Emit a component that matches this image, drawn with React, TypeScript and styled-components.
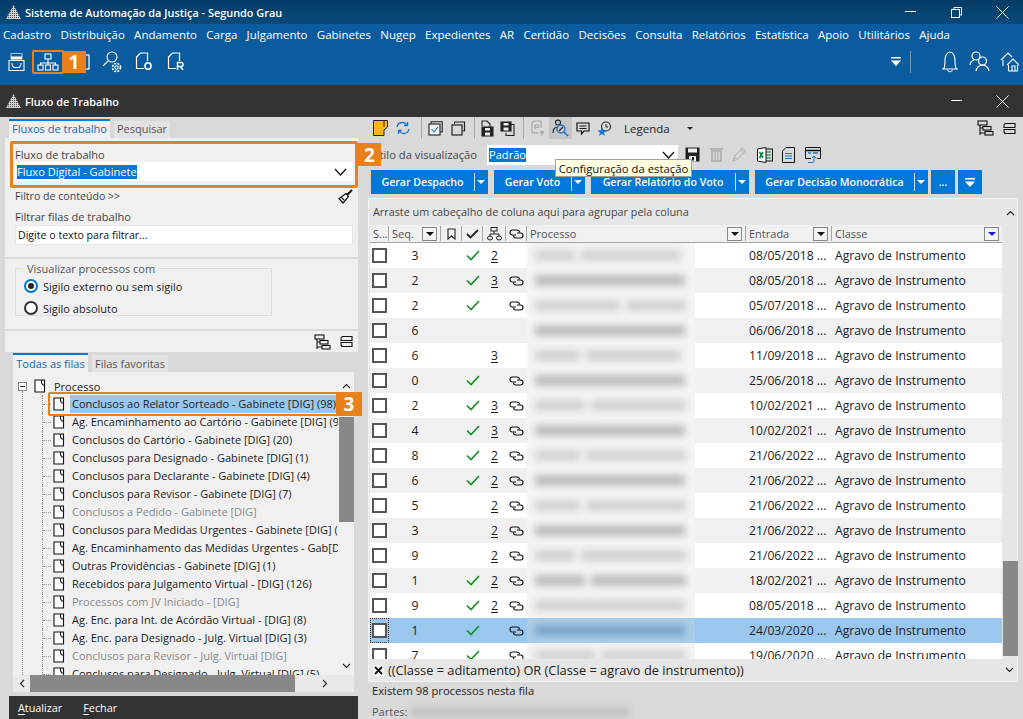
import React from 'react';
import styled, { createGlobalStyle } from 'styled-components';

const ORANGE = '#e8811c';
const FONT = '"Open Sans", "Noto Sans", "Liberation Sans", sans-serif';

const GlobalStyle = createGlobalStyle`
  html, body {
    margin: 0;
    padding: 0;
    background: #d9d9d9;
    font-family: ${FONT};
    font-size: 11px;
    color: #222;
  }
`;

const Page = styled.div`
  width: 1023px;
  height: 719px;
  overflow: hidden;
  display: flex;
  flex-direction: column;
  background: #d9d9d9;
`;

const TitleBar = styled.div`
  height: 24px;
  flex: none;
  display: flex;
  align-items: center;
  padding-left: 6px;
  gap: 4px;
  color: #fff;
  background: linear-gradient(#063c66, #084a7c);
`;

const TitleText = styled.span`
  font-size: 10.9px;
  font-weight: 600;
`;

const WinButtons = styled.div`
  margin-left: auto;
  margin-right: -2px;
  display: flex;
`;

const WinButton = styled.span`
  width: 46px;
  display: flex;
  justify-content: center;
  align-items: center;
`;

const MenuBar = styled.div`
  height: 20px;
  flex: none;
  display: flex;
  align-items: center;
  gap: 9.3px;
  padding-left: 3px;
  color: #fff;
  background: #0b5c9e;
  font-size: 11.5px;
`;

const Toolbar = styled.div`
  height: 41px;
  flex: none;
  display: flex;
  align-items: center;
  box-sizing: border-box;
  padding-bottom: 6px;
  background: #0b5c9e;
`;

const ToolSlot = styled.span<{ $active?: boolean; $w?: number }>`
  position: relative;
  width: ${(p) => p.$w || 32}px;
  height: 24px;
  flex: none;
  display: flex;
  justify-content: center;
  align-items: center;
  box-sizing: border-box;
  border: ${(p) => (p.$active ? `2px solid ${ORANGE}` : 'none')};
  border-radius: 2px;
`;

const ToolRight = styled.div`
  margin-left: auto;
  display: flex;
  align-items: center;
  margin-right: -2px;
`;

const ToolDivider = styled.span`
  width: 1px;
  height: 22px;
  margin: 0 24px 0 9px;
  background: #7d97ae;
`;

const Callout = styled.span<{ $left: number; $top: number; $w: number; $h: number }>`
  position: absolute;
  left: ${(p) => p.$left}px;
  top: ${(p) => p.$top}px;
  width: ${(p) => p.$w}px;
  height: ${(p) => p.$h}px;
  display: flex;
  justify-content: center;
  align-items: center;
  background: ${ORANGE};
  color: #fff;
  font-size: 19px;
  font-weight: 700;
  z-index: 5;
`;

const Frame = styled.span<{ $left: number; $top: number; $w: number; $h: number; $b: number }>`
  position: absolute;
  left: ${(p) => p.$left}px;
  top: ${(p) => p.$top}px;
  width: ${(p) => p.$w}px;
  height: ${(p) => p.$h}px;
  box-sizing: border-box;
  border: ${(p) => p.$b}px solid ${ORANGE};
  border-radius: 2px;
  z-index: 4;
  pointer-events: none;
`;

const WindowHeader = styled.div`
  height: 32px;
  flex: none;
  display: flex;
  align-items: center;
  padding-left: 6px;
  gap: 4px;
  background: #333;
  color: #fff;
`;

const Main = styled.div`
  flex: 1;
  display: flex;
  min-height: 0;
`;

const LeftPane = styled.div`
  position: relative;
  z-index: 2;
  width: 362px;
  flex: none;
  display: flex;
  flex-direction: column;
  padding-top: 2px;
  box-sizing: border-box;
`;

const Tabs = styled.div<{ $left: number; $lift?: number }>`
  display: flex;
  align-items: flex-end;
  gap: 4px;
  margin-left: ${(p) => p.$left}px;
  height: 19px;
  & > span {
    padding-bottom: ${(p) => p.$lift || 0}px;
  }
`;

const Tab = styled.span<{ $active?: boolean; $w: number }>`
  width: ${(p) => p.$w}px;
  height: ${(p) => (p.$active ? 19 : 17)}px;
  box-sizing: border-box;
  display: flex;
  align-items: center;
  justify-content: center;
  background: ${(p) => (p.$active ? '#f0f0f0' : '#e3e3e3')};
  border-top: ${(p) => (p.$active ? '2px solid #0078d7' : 'none')};
  color: ${(p) => (p.$active ? '#0a6cc0' : '#555')};
  font-size: 11px;
`;

const Panel = styled.div`
  margin: 0 0 1px 5px;
  width: 353px;
  height: 214px;
  display: flex;
  flex-direction: column;
  gap: 2px;
`;

const PanelSection = styled.div<{ $h: number }>`
  height: ${(p) => p.$h}px;
  flex: none;
  background: #f0f0f0;
  box-sizing: border-box;
  padding: 0 5px 0 10px;
`;

const FieldLabel = styled.div<{ $top: number }>`
  padding-top: ${(p) => p.$top}px;
  line-height: 13px;
  color: #444;
  font-size: 11px;
`;

const SelectBox = styled.div`
  height: 19px;
  margin-top: 1px;
  box-sizing: border-box;
  background: #fff;
  display: flex;
  align-items: center;
  justify-content: space-between;
  padding: 0 6px 0 2px;
  font-size: 11.1px;
`;

const Selected = styled.span`
  background: #0078d7;
  color: #fff;
  line-height: 14px;
`;

const FilterLine = styled.div`
  display: flex;
  justify-content: space-between;
  align-items: center;
  height: 18px;
  margin-top: 6px;
  color: #444;
  font-size: 10.6px;
`;

const TextInput = styled.div`
  height: 20px;
  margin-top: 2px;
  background: #fff;
  border: 1px solid #e6e6e6;
  box-sizing: border-box;
  display: flex;
  align-items: center;
  padding-left: 2px;
  font-size: 10.6px;
  color: #111;
`;

const RadioSet = styled.fieldset`
  margin: 3px 0 0;
  padding: 0 0 0 8px;
  width: 257px;
  height: 54px;
  box-sizing: border-box;
  border: 1px solid #dedede;
`;

const RadioLegend = styled.legend`
  margin-left: -1px;
  padding: 0 4px;
  font-size: 11px;
  line-height: 13px;
  color: #555;
`;

const RadioRow = styled.div`
  display: flex;
  align-items: center;
  gap: 5px;
  height: 22px;
  font-size: 11px;
  color: #222;
`;

const RadioDot = styled.span<{ $on?: boolean }>`
  width: 14px;
  height: 14px;
  box-sizing: border-box;
  border-radius: 50%;
  border: 2px solid ${(p) => (p.$on ? '#0078d7' : '#333')};
  background: #fff;
  display: flex;
  justify-content: center;
  align-items: center;
  &::after {
    content: '';
    width: 6px;
    height: 6px;
    border-radius: 50%;
    background: ${(p) => (p.$on ? '#222' : 'transparent')};
  }
`;

const IconStrip = styled.div<{ $pad: number; $push?: boolean }>`
  display: flex;
  justify-content: flex-end;
  align-items: center;
  gap: 9px;
  height: 100%;
  padding-right: ${(p) => p.$pad}px;
  margin-left: ${(p) => (p.$push ? 'auto' : '0')};
`;

const TreePanel = styled.div`
  margin-left: 13px;
  width: 341px;
  height: 320px;
  background: #f0f0f0;
  display: flex;
  flex-direction: column;
`;

const TreeBody = styled.div`
  flex: 1;
  min-height: 0;
  display: flex;
`;

const TreeList = styled.div`
  flex: 1;
  min-width: 0;
  overflow: hidden;
  padding-top: 5px;
`;

const TreeListInner = styled.div`
  position: relative;
`;

const TreeRoot = styled.div`
  height: 18px;
  display: flex;
  align-items: center;
  padding-left: 5px;
  gap: 7px;
  white-space: nowrap;
  font-size: 11px;
`;

const RootLabel = styled.span`
  margin-left: 1px;
`;

const Collapse = styled.span`
  width: 9px;
  height: 9px;
  flex: none;
  box-sizing: border-box;
  border: 1px solid #888;
  background: #fff;
  display: flex;
  justify-content: center;
  align-items: center;
  &::after {
    content: '';
    width: 5px;
    height: 1px;
    background: #333;
  }
`;

const TreeRow = styled.div<{ $muted?: boolean }>`
  position: relative;
  height: 18px;
  display: flex;
  align-items: center;
  padding-left: 40px;
  white-space: nowrap;
  color: ${(p) => (p.$muted ? '#8a8a8a' : '#1b1b1b')};
  svg {
    flex: none;
  }
  &::before {
    content: '';
    position: absolute;
    left: 29px;
    top: 0;
    bottom: 0;
    border-left: 1px dotted #999;
  }
  &::after {
    content: '';
    position: absolute;
    left: 30px;
    width: 8px;
    top: 9px;
    border-top: 1px dotted #999;
  }
`;

const RootLine = styled.span`
  position: absolute;
  left: 9px;
  top: 14px;
  height: 300px;
  border-left: 1px dotted #999;
`;

const TreeLabel = styled.span<{ $sel?: boolean }>`
  margin-left: 5px;
  padding-left: 2px;
  line-height: 18px;
  flex: ${(p) => (p.$sel ? 1 : 'none')};
  background: ${(p) => (p.$sel ? '#9ac7ee' : 'transparent')};
  font-size: 11px;
`;

const VBar = styled.div`
  width: 16px;
  flex: none;
  margin-top: 5px;
  display: flex;
  flex-direction: column;
  align-items: center;
`;

const BarArrow = styled.span<{ $h?: number; $end?: boolean }>`
  height: ${(p) => p.$h || 18}px;
  margin-top: ${(p) => (p.$end ? 'auto' : '0')};
  flex: none;
  display: flex;
  justify-content: center;
  align-items: center;
`;

const VThumb = styled.div<{ $h: number; $mt: string }>`
  width: 15px;
  height: ${(p) => p.$h}px;
  margin-top: ${(p) => p.$mt};
  background: #888;
  flex: none;
`;

const HBar = styled.div`
  height: 17px;
  flex: none;
  display: flex;
  align-items: center;
  background: #e9e9e9;
`;

const HThumb = styled.div`
  width: 265px;
  height: 100%;
  background: #888;
`;

const ArrowCell = styled.span<{ $w: number }>`
  width: ${(p) => p.$w}px;
  display: flex;
  justify-content: center;
  flex: none;
`;

const BottomBar = styled.div`
  margin: 4px 0 0 9px;
  width: 349px;
  flex: 1;
  background: #333;
  color: #fff;
  display: flex;
  align-items: center;
  gap: 21px;
  padding-left: 9px;
  box-sizing: border-box;
  font-size: 10.8px;
  u {
    text-underline-offset: 2px;
  }
`;

const RightPane = styled.div`
  position: relative;
  flex: 1;
  display: flex;
  flex-direction: column;
  min-width: 0;
`;

const ActionBar = styled.div`
  height: 24px;
  flex: none;
  box-sizing: border-box;
  padding: 0 0 2px 10px;
  display: flex;
  align-items: center;
`;

const ActionSlot = styled.span<{ $w: number; $on?: boolean }>`
  width: ${(p) => p.$w}px;
  height: 22px;
  flex: none;
  display: flex;
  justify-content: center;
  align-items: center;
  background: ${(p) => (p.$on ? '#c6c6c6' : 'transparent')};
`;

const ActionSep = styled.span`
  width: 1px;
  height: 22px;
  flex: none;
  margin: 0 3px;
  background: #aaa;
`;

const Legend = styled.span`
  margin-left: 10px;
  font-size: 11.5px;
  color: #222;
`;

const Caret = styled.span<{ $color?: string; $size?: number }>`
  display: inline-block;
  width: 0;
  height: 0;
  border-left: ${(p) => p.$size || 3}px solid transparent;
  border-right: ${(p) => p.$size || 3}px solid transparent;
  border-top: ${(p) => p.$size || 3}px solid ${(p) => p.$color || '#222'};
`;

const CaretBox = styled.span`
  margin-left: 17px;
  display: flex;
`;

const ViewRow = styled.div`
  height: 27px;
  flex: none;
  display: flex;
  align-items: center;
  padding-left: 6px;
`;

const ViewLabel = styled.span`
  width: 119px;
  flex: none;
  color: #444;
  font-size: 11.2px;
  white-space: nowrap;
`;

const ViewSelect = styled(SelectBox)`
  width: 191px;
  flex: none;
  margin: 0 7px 0 0;
  height: 20px;
  padding-right: 3px;
`;

const ViewIcons = styled.div`
  display: flex;
  align-items: center;
  gap: 9.5px;
`;

const ButtonRow = styled.div`
  height: 24px;
  flex: none;
  margin-top: 2px;
  padding-left: 9px;
  display: flex;
  gap: 6px;
`;

const ActionButton = styled.span<{ $w: number; $gap?: number }>`
  width: ${(p) => p.$w}px;
  margin-right: ${(p) => p.$gap ?? 0}px;
  height: 24px;
  flex: none;
  display: flex;
  align-items: center;
  justify-content: center;
  box-sizing: border-box;
  background: #0078d7;
  color: #fff;
  font-size: 10.6px;
  font-weight: 600;
  white-space: nowrap;
`;

const SplitLabel = styled.span`
  flex: 1;
  text-align: center;
`;

const SplitArrow = styled.span`
  width: 14px;
  height: 100%;
  flex: none;
  display: flex;
  justify-content: center;
  align-items: center;
  position: relative;
  &::before {
    content: '';
    position: absolute;
    left: 0;
    top: 3px;
    bottom: 3px;
    width: 1px;
    background: #cfe4f7;
  }
`;

const Card = styled.div`
  margin: 4px 0 0 6px;
  width: 650px;
  height: 484px;
  flex: none;
  box-sizing: border-box;
  border: 1px solid #f4f4f4;
  background: #e6e6e6;
  display: flex;
  flex-direction: column;
`;

const CardMain = styled.div`
  flex: 1;
  min-height: 0;
  display: flex;
  padding-left: 1px;
`;

const CardContent = styled.div`
  width: 632px;
  flex: none;
  display: flex;
  flex-direction: column;
`;

const GroupHint = styled.div`
  height: 26px;
  flex: none;
  display: flex;
  align-items: center;
  padding-left: 3px;
  padding-bottom: 1px;
  box-sizing: border-box;
  color: #444;
  font-size: 10.8px;
`;

const COLS = '19px 52px 21px 21px 23px 21px 219px 86px 170px';

const HeaderRow = styled.div`
  height: 17px;
  flex: none;
  display: grid;
  grid-template-columns: ${COLS};
  background: #f0f0f0;
  border-bottom: 1px solid #a5a5a5;
`;

const HeaderCell = styled.div<{ $center?: boolean }>`
  display: flex;
  align-items: center;
  justify-content: ${(p) => (p.$center ? 'center' : 'space-between')};
  padding: ${(p) => (p.$center ? '0' : '0 3px 0 3px')};
  border-right: 1px solid #a5a5a5;
  margin: 1px 0;
  color: #555;
  font-size: 11px;
  white-space: nowrap;
  overflow: hidden;
  &:last-child {
    border-right: none;
  }
`;

const SortButton = styled.span`
  width: 15px;
  height: 14px;
  flex: none;
  box-sizing: border-box;
  border: 1px solid #888;
  background: #f3f3f3;
  display: flex;
  justify-content: center;
  align-items: center;
`;

const Rows = styled.div`
  flex: 1;
  min-height: 0;
  overflow: hidden;
`;

const Row = styled.div<{ $stripe: boolean; $sel?: boolean }>`
  height: 25px;
  display: grid;
  grid-template-columns: ${COLS};
  align-items: center;
  background: ${(p) => (p.$sel ? '#99c7ee' : p.$stripe ? '#f0f0f0' : '#fff')};
  color: #1c1c1c;
  font-size: 12.2px;
`;

const CheckCell = styled.div<{ $focus?: boolean }>`
  height: 100%;
  display: flex;
  align-items: center;
  justify-content: center;
  box-sizing: border-box;
  outline: ${(p) => (p.$focus ? '1px dotted #333' : 'none')};
  outline-offset: -1px;
`;

const CheckBox = styled.span`
  width: 15px;
  height: 15px;
  box-sizing: border-box;
  border: 2px solid #555;
  background: #fff;
`;

const Center = styled.div`
  display: flex;
  justify-content: center;
  align-items: center;
`;

const LinkNumber = styled.u`
  text-underline-offset: 2px;
`;

const SmearCell = styled.div`
  height: 100%;
  overflow: hidden;
`;

const SmearBack = styled.div<{ $sel?: boolean }>`
  width: 168px;
  height: 100%;
  display: flex;
  align-items: center;
  gap: 6px;
  padding-left: 8px;
  box-sizing: border-box;
  background: ${(p) => (p.$sel ? '#a9cde9' : '#f4f4f4')};
`;

const Smear = styled.span<{ $w: number; $sel?: boolean; $dark?: boolean }>`
  width: ${(p) => p.$w}px;
  height: 11px;
  flex: none;
  background: ${(p) => (p.$sel ? '#7ba7ca' : p.$dark ? '#bdbdbd' : '#d2d2d2')};
  filter: blur(3.5px);
`;

const TextCell = styled.div`
  padding-left: 3px;
  white-space: nowrap;
  overflow: hidden;
`;

const FilterBar = styled.div`
  height: 22px;
  flex: none;
  display: flex;
  align-items: center;
  gap: 4px;
  padding-left: 4px;
  font-size: 12.8px;
  color: #222;
`;

const ClearFilter = styled.span`
  width: 11px;
  height: 11px;
  background: #f7f7f7;
  display: flex;
  justify-content: center;
  align-items: center;
`;

const FilterChevron = styled.span`
  margin-left: auto;
  margin-right: 3px;
  display: flex;
`;

const StatusLine = styled.div`
  height: 18px;
  margin: 0 0 0 10px;
  display: flex;
  align-items: center;
  color: #222;
  font-size: 11.2px;
`;

const PartsLine = styled.div`
  flex: 1;
  margin: 5px 0 0 10px;
  display: flex;
  align-items: flex-start;
  gap: 3px;
  color: #555;
  font-size: 11px;
`;

const PartsSmear = styled.span`
  width: 220px;
  height: 10px;
  margin-top: 3px;
  background: #c3c3c3;
  filter: blur(3px);
`;

const Tooltip = styled.div`
  position: absolute;
  left: 193px;
  top: 42px;
  width: 137px;
  height: 18px;
  box-sizing: border-box;
  background: #ffffe1;
  border: 1px solid #a0a0a0;
  display: flex;
  align-items: center;
  justify-content: center;
  font-size: 11.3px;
  color: #111;
  white-space: nowrap;
  z-index: 6;
`;

/* drawings */

const Logo = () => (
  <svg width="15" height="14" viewBox="0 0 15 14">
    <defs>
      <pattern id="logoDots" width="2" height="2" patternUnits="userSpaceOnUse">
        <rect width="2" height="2" fill="#cfcfcf" />
        <rect width="1" height="1" fill="#555" />
      </pattern>
    </defs>
    <polygon points="7.5,0 15,14 0,14" fill="url(#logoDots)" />
  </svg>
);

const Minimize = () => (
  <svg width="11" height="2" viewBox="0 0 11 2">
    <rect width="11" height="1" fill="#fff" />
  </svg>
);

const Restore = () => (
  <svg width="11" height="11" viewBox="0 0 11 11" fill="none" stroke="#fff">
    <rect x="0.5" y="2.5" width="8" height="8" />
    <path d="M3 2.5V.5h7.5V8H8.5" />
  </svg>
);

const CloseX = () => (
  <svg width="13" height="13" viewBox="0 0 13 13" stroke="#fff" strokeWidth="1">
    <path d="M.5.5l12 12M12.5.5l-12 12" />
  </svg>
);

const Tray = () => (
  <svg width="17" height="20" viewBox="0 0 17 20" fill="none" stroke="#fff" strokeWidth="1.1">
    <path d="M3 7V1.500h11V7" stroke="#9fbfd8" />
    <rect x="3" y="4.500" width="11" height="3" fill="#fff" stroke="none" />
    <path d="M1 8.500h15V18.500H1zM4 11c0 3 1 4.500 3 4.500h3c2 0 3-1.500 3-4.500" />
  </svg>
);

const OrgChart = () => (
  <svg width="22" height="18" viewBox="0 0 22 18" fill="none" stroke="#fff" strokeWidth="1.1">
    <rect x="8" y="1" width="6" height="5" />
    <path d="M11 6v4M3.500 12v-2h15v2M11 10v2" />
    <rect x="1" y="12" width="5" height="5" />
    <rect x="8.500" y="12" width="5" height="5" />
    <rect x="16" y="12" width="5" height="5" />
  </svg>
);

const HiddenDoc = () => (
  <svg width="20" height="16" viewBox="0 0 20 16" fill="none" stroke="#fff" strokeWidth="1.2">
    <rect x="1" y="1" width="18" height="14" />
  </svg>
);

const SearchGear = () => (
  <svg width="20" height="22" viewBox="0 0 20 22" fill="none" stroke="#fff" strokeWidth="1.1">
    <circle cx="10" cy="6" r="5" />
    <path d="M6 10l-5 5" />
    <circle cx="14.500" cy="16.500" r="1.700" />
    <circle cx="14.500" cy="16.500" r="4" strokeDasharray="2 1.200" strokeWidth="1.600" />
  </svg>
);

const DocLetter = ({ letter }: { letter: string }) => (
  <svg width="18" height="19" viewBox="0 0 18 19" fill="none" stroke="#fff" strokeWidth="1.2">
    <path d="M9 16.500H1.500V5L5.500 1H12.500V9" />
    {letter === 'O' ? (
      <ellipse cx="13" cy="14" rx="3" ry="3.300" strokeWidth="1.600" />
    ) : (
      <path d="M10.500 18v-7.500h3.500a2 2 0 010 4h-3.500M13.500 14.500l2.500 3.500" strokeWidth="1.500" />
    )}
  </svg>
);

const FilterArrow = () => (
  <svg width="10" height="9" viewBox="0 0 10 9" fill="#fff">
    <rect width="10" height="1.500" />
    <polygon points="0,3.500 10,3.500 5,9" />
  </svg>
);

const Bell = () => (
  <svg width="18" height="23" viewBox="0 0 18 23" fill="none" stroke="#fff" strokeWidth="1.100">
    <path d="M1 19h16M2.500 19c1.500-2 1.500-4 1.500-9 0-4 2-8 5-8s5 4 5 8c0 5 0 7 1.500 9" />
    <path d="M6.500 19.500c.5 3 4.500 3 5 0" stroke="#c8d6e2" />
  </svg>
);

const Users = () => (
  <svg width="22" height="21" viewBox="0 0 22 21" fill="none" stroke="#fff" strokeWidth="1.200">
    <circle cx="7" cy="5" r="4" />
    <path d="M1 14c.5-3 2-4.500 4-5" />
    <circle cx="13.500" cy="10" r="4" fill="#0b5c9e" />
    <path d="M7 20c.5-3 3-6 6.500-6s6 3 6.500 6" />
  </svg>
);

const Home = () => (
  <svg width="20" height="20" viewBox="0 0 20 20" fill="none" stroke="#fff" strokeWidth="1.100">
    <path d="M1 8l7-7 4 4M7 13l6-6 6 6M8.500 19h9v-6M8.500 13v6M12 19v-5h3v5" />
    <path d="M3 8v6" />
  </svg>
);

const ChevronDown = () => (
  <svg width="13" height="8" viewBox="0 0 13 8" fill="none" stroke="#111" strokeWidth="1.300">
    <path d="M1 1l5.500 6L12 1" />
  </svg>
);

const Broom = () => (
  <svg width="15" height="15" viewBox="0 0 15 15" fill="none" stroke="#111" strokeWidth="1.200">
    <path d="M14 1L9 6" strokeWidth="2" />
    <path d="M8 4.500L1 9.500l4 4.500 5.500-6.500z" fill="#fff" />
    <path d="M3 8l3 3" />
  </svg>
);

const TreeTable = () => (
  <svg width="17" height="16" viewBox="0 0 17 16" fill="none" stroke="#111" strokeWidth="1.100">
    <rect x="1" y="1" width="9" height="4" />
    <rect x="6" y="6.500" width="8" height="3.500" />
    <rect x="8" y="11.500" width="8" height="3.500" />
    <path d="M3 5v10M3 8h3M3 13h5" />
  </svg>
);

const Rows2 = () => (
  <svg width="13" height="13" viewBox="0 0 13 13" fill="none" stroke="#111" strokeWidth="1.100">
    <path d="M3 1.500h9v4H1v-2a2 2 0 012-2zM3 11.500h9v-4H1v2a2 2 0 002 2z" />
  </svg>
);

const TreeDoc = () => (
  <svg width="12" height="14" viewBox="0 0 12 14" fill="none" stroke="#111" strokeWidth="1.100">
    <path d="M7 1H1v12h9.500V6" fill="#fff" />
    <path d="M7.500 1h3v5h-1.500L7.500 4z" fill="#fff" />
  </svg>
);

const FlipY = styled.svg<{ $flip?: boolean }>`
  transform: ${(p) => (p.$flip ? 'scaleY(-1)' : 'none')};
`;

const FlipX = styled.svg<{ $flip?: boolean }>`
  transform: ${(p) => (p.$flip ? 'scaleX(-1)' : 'none')};
`;

const Up = ({ flip }: { flip?: boolean }) => (
  <FlipY $flip={flip} width="9" height="6" viewBox="0 0 9 6" fill="none" stroke="#222" strokeWidth="1.100">
    <path d="M1 5l3.500-3.500L8 5" />
  </FlipY>
);

const Side = ({ flip }: { flip?: boolean }) => (
  <FlipX $flip={flip} width="6" height="9" viewBox="0 0 6 9" fill="none" stroke="#222" strokeWidth="1.100">
    <path d="M5 1L1.500 4.500 5 8" />
  </FlipX>
);

const YellowDoc = () => (
  <svg width="15" height="16" viewBox="0 0 15 16">
    <path d="M.5.500h14V7L11 10v5.500H.5z" fill="#fdb714" stroke="#222" />
    <path d="M11 .5V7" stroke="#222" fill="none" />
  </svg>
);

const Refresh = () => (
  <svg width="14" height="14" viewBox="0 0 14 14" fill="none" stroke="#1a73d2" strokeWidth="1.300">
    <path d="M1 6c.5-3 3-4.500 5.500-4.500 2 0 3.500 1 4.500 2.500M11.500 1v3.500H8M13 8c-.5 3-3 4.500-5.500 4.500-2 0-3.500-1-4.500-2.500M2.500 13V9.500H6" />
  </svg>
);

const CheckDoc = () => (
  <svg width="15" height="15" viewBox="0 0 15 15" fill="none" stroke="#222" strokeWidth="1.100">
    <path d="M3 3V.8h11.200V11H12" />
    <rect x="1" y="3" width="11" height="11" fill="#f0f0f0" />
    <path d="M3.500 8l2.500 3 4-5" stroke="#1a73d2" />
  </svg>
);

const Copy = () => (
  <svg width="15" height="15" viewBox="0 0 15 15" fill="none" stroke="#222" strokeWidth="1.200">
    <path d="M3.500 3V1h10v9h-2" />
    <rect x="1" y="4" width="10" height="10" />
  </svg>
);

const Floppy = () => (
  <svg width="15" height="15" viewBox="0 0 15 15">
    <rect x="0.500" y="0.500" width="14" height="14" fill="#222" />
    <rect x="3" y="1.500" width="9" height="4" fill="#eee" />
    <rect x="4" y="9" width="7" height="5.500" fill="#eee" />
    <rect x="7" y="10" width="2" height="3.500" fill="#222" />
  </svg>
);

const DocFloppy = () => (
  <svg width="16" height="17" viewBox="0 0 16 17" fill="none" stroke="#222" strokeWidth="1.100">
    <path d="M4 6V1h5l3 3v3" />
    <rect x="4" y="7" width="11" height="9" fill="#222" />
    <rect x="7" y="8" width="5" height="2.500" fill="#eee" stroke="none" />
    <rect x="7" y="12.500" width="5" height="3" fill="#eee" stroke="none" />
  </svg>
);

const FloppyDoc = () => (
  <svg width="15" height="15" viewBox="0 0 15 15" fill="none" stroke="#222" strokeWidth="1.100">
    <path d="M11 3.500h3v11H6V12" />
    <rect x="1" y="1" width="10" height="9" fill="#222" />
    <rect x="3.500" y="2" width="5" height="2.500" fill="#eee" stroke="none" />
    <rect x="3.500" y="6.500" width="5" height="3" fill="#eee" stroke="none" />
  </svg>
);

const DisabledDoc = () => (
  <svg width="14" height="17" viewBox="0 0 14 17" fill="none" stroke="#a5a5a5" strokeWidth="1.100">
    <path d="M8 13H1V3l2-2h7v7" />
    <path d="M4 9V5h2.500a1.200 1.200 0 010 2.500H4M11 16v-5M9 13l2-2 2 2" />
  </svg>
);

const StationSearch = () => (
  <svg width="17" height="18" viewBox="0 0 17 18" fill="none" stroke="#111" strokeWidth="1.100">
    <circle cx="6" cy="3.500" r="2.500" />
    <path d="M1 14c0-4 2-6 5-6" />
    <circle cx="9" cy="10" r="4" stroke="#1a73d2" strokeWidth="1.400" />
    <path d="M12 13l4 4" stroke="#1a73d2" strokeWidth="1.600" />
    <path d="M7 12l4-4" stroke="#222" />
  </svg>
);

const Comment = () => (
  <svg width="14" height="13" viewBox="0 0 14 13" fill="none" stroke="#111" strokeWidth="1.200">
    <path d="M1 1h12v8H8l-2.500 3V9H1z" />
    <path d="M3.500 4h7M3.500 6.500h7" strokeWidth="1" />
  </svg>
);

const StarClock = () => (
  <svg width="15" height="15" viewBox="0 0 15 15" fill="none">
    <circle cx="9" cy="5.500" r="4.500" stroke="#222" strokeWidth="1.100" />
    <path d="M9 3v3h2" stroke="#222" />
    <polygon points="5,6 6.200,9.300 9.800,9.400 7,11.500 8,15 5,13 2,15 3,11.500 .2,9.400 3.800,9.300" fill="#1a73d2" />
  </svg>
);

const Trash = () => (
  <svg width="13" height="15" viewBox="0 0 13 15" fill="#b5b5b5">
    <rect x="0" y="1" width="13" height="2" />
    <path d="M1 3h11v12H1zM3 5v8h1.500V5zM5.800 5v8h1.400V5zM8.500 5v8H10V5z" fillRule="evenodd" />
  </svg>
);

const Pencil = () => (
  <svg width="15" height="15" viewBox="0 0 15 15" fill="none" stroke="#b8b8b8" strokeWidth="1.100">
    <path d="M1 14l1-4 8-9 3.500 3-8.500 8.500zM2 10l3 2.500M8.500 2.500L12 6" />
  </svg>
);

const Excel = () => (
  <svg width="16" height="16" viewBox="0 0 16 16" fill="none">
    <rect x="7" y="2" width="8.500" height="12" stroke="#111" />
    <path d="M9 5h5M9 8h5M9 11h5" stroke="#0f7b3f" />
    <polygon points="0.500,2 9,.5 9,15.500 .5,14" fill="#fff" stroke="#111" />
    <path d="M2.500 5l3.500 6M6 5l-3.500 6" stroke="#0f7b3f" strokeWidth="1.600" />
  </svg>
);

const TextDoc = () => (
  <svg width="13" height="16" viewBox="0 0 13 16" fill="none" stroke="#111">
    <path d="M4 .5h8.500v15H.5V4z" />
    <path d="M3 6.500h7M3 9h7M3 11.500h7" stroke="#1a73d2" />
  </svg>
);

const WindowUp = () => (
  <svg width="16" height="16" viewBox="0 0 16 16" fill="none" stroke="#111">
    <path d="M6 11.500H.5V.5h15v11H12" />
    <path d="M1 3.500h14" strokeWidth="1.500" />
    <path d="M3 6h3M8 6h5" stroke="#1a73d2" strokeWidth="1.500" />
    <path d="M9 9v5a1.500 1.500 0 01-1.500 1.500H3M7 11l2-2 2 2" stroke="#1a73d2" />
  </svg>
);

const Bookmark = () => (
  <svg width="9" height="12" viewBox="0 0 9 12" fill="none" stroke="#222" strokeWidth="1.100">
    <path d="M1 1h7v10L4.500 8 1 11z" />
  </svg>
);

const HeadCheck = () => (
  <svg width="13" height="10" viewBox="0 0 13 10" fill="none" stroke="#222" strokeWidth="1.800">
    <path d="M1 5l3.500 3.500L12 1" />
  </svg>
);

const HeadFlow = () => (
  <svg width="15" height="14" viewBox="0 0 15 14" fill="none" stroke="#222" strokeWidth="1">
    <rect x="4" y="0.500" width="6" height="3.500" />
    <path d="M7 4v3M3 9V7h9v2" />
    <ellipse cx="3" cy="11" rx="2.500" ry="2" />
    <ellipse cx="12" cy="11" rx="2.500" ry="2" />
  </svg>
);

const LinkIcon = () => (
  <svg width="15" height="10" viewBox="0 0 15 10" fill="none" stroke="#111" strokeWidth="1.100">
    <path d="M7 6H3.500a2.500 2.500 0 010-5H8a2.500 2.500 0 012.500 2.500" />
    <path d="M8 4h3.500a2.500 2.500 0 010 5H7a2.500 2.500 0 01-2.500-2.500" />
  </svg>
);

const GreenCheck = () => (
  <svg width="14" height="11" viewBox="0 0 14 11" fill="none" stroke="#0f8f1e" strokeWidth="1.600">
    <path d="M1 5.500l4 4L13 1" />
  </svg>
);

const SmallX = () => (
  <svg width="9" height="9" viewBox="0 0 9 9" stroke="#111" strokeWidth="1.800">
    <path d="M1 1l7 7M8 1L1 8" />
  </svg>
);

/* data */

const menuItems = ['Cadastro', 'Distribuição', 'Andamento', 'Carga', 'Julgamento', 'Gabinetes', 'Nugep', 'Expedientes', 'AR', 'Certidão', 'Decisões', 'Consulta', 'Relatórios', 'Estatística', 'Apoio', 'Utilitários', 'Ajuda'];

const queues: { label: string; muted?: boolean }[] = [
  { label: 'Conclusos ao Relator Sorteado - Gabinete [DIG] (98)' },
  { label: 'Ag. Encaminhamento ao Cartório - Gabinete [DIG] (9)' },
  { label: 'Conclusos do Cartório - Gabinete [DIG] (20)' },
  { label: 'Conclusos para Designado - Gabinete [DIG] (1)' },
  { label: 'Conclusos para Declarante - Gabinete [DIG] (4)' },
  { label: 'Conclusos para Revisor - Gabinete [DIG] (7)' },
  { label: 'Conclusos a Pedido - Gabinete [DIG]', muted: true },
  { label: 'Conclusos para Medidas Urgentes - Gabinete [DIG] (1)' },
  { label: 'Ag. Encaminhamento das Medidas Urgentes - Gab[DIG] (1)' },
  { label: 'Outras Providências - Gabinete [DIG] (1)' },
  { label: 'Recebidos para Julgamento Virtual - [DIG] (126)' },
  { label: 'Processos com JV Iniciado - [DIG]', muted: true },
  { label: 'Ag. Enc. para Int. de Acórdão Virtual - [DIG] (8)' },
  { label: 'Ag. Enc. para Designado - Julg. Virtual [DIG] (3)' },
  { label: 'Conclusos para Revisor - Julg. Virtual [DIG]', muted: true },
  { label: 'Conclusos para Designado - Julg. Virtual [DIG] (5)' },
];

type Proc = { seq: number; ok?: boolean; num?: number; link?: boolean; date: string; smear: number[]; sel?: boolean };

const procs: Proc[] = [
  { seq: 3, ok: true, num: 2, date: '08/05/2018', smear: [40, 100] },
  { seq: 2, ok: true, num: 3, link: true, date: '08/05/2018', smear: [150] },
  { seq: 2, ok: true, link: true, date: '05/07/2018', smear: [85, 60] },
  { seq: 6, date: '06/06/2018', smear: [150] },
  { seq: 6, num: 3, date: '11/09/2018', smear: [45, 95] },
  { seq: 0, ok: true, link: true, date: '25/06/2018', smear: [150] },
  { seq: 2, ok: true, num: 3, link: true, date: '10/02/2021', smear: [50, 95] },
  { seq: 4, ok: true, num: 3, link: true, date: '10/02/2021', smear: [150] },
  { seq: 8, ok: true, num: 2, link: true, date: '21/06/2022', smear: [45, 100] },
  { seq: 6, ok: true, num: 2, link: true, date: '21/06/2022', smear: [150] },
  { seq: 5, num: 2, link: true, date: '21/06/2022', smear: [45, 100] },
  { seq: 3, num: 2, link: true, date: '21/06/2022', smear: [150] },
  { seq: 9, num: 2, link: true, date: '21/06/2022', smear: [40, 105] },
  { seq: 1, ok: true, num: 2, link: true, date: '18/02/2021', smear: [50, 95] },
  { seq: 9, ok: true, num: 2, link: true, date: '08/05/2018', smear: [150] },
  { seq: 1, ok: true, link: true, date: '24/03/2020', smear: [150], sel: true },
  { seq: 7, ok: true, link: true, date: '19/06/2020', smear: [60, 85] },
];

const Sort = ({ color }: { color?: string }) => (
  <SortButton>
    <Caret $color={color || '#111'} $size={4} />
  </SortButton>
);

const SplitCaret = () => (
  <SplitArrow>
    <Caret $color="#fff" $size={4} />
  </SplitArrow>
);

const App = () => {
  return (
    <Page>
      <GlobalStyle />
      <TitleBar>
        <Logo />
        <TitleText>Sistema de Automação da Justiça - Segundo Grau</TitleText>
        <WinButtons>
          <WinButton><Minimize /></WinButton>
          <WinButton><Restore /></WinButton>
          <WinButton><CloseX /></WinButton>
        </WinButtons>
      </TitleBar>

      <MenuBar>
        {menuItems.map((item) => (
          <span key={item}>{item}</span>
        ))}
      </MenuBar>

      <Toolbar>
        <ToolSlot><Tray /></ToolSlot>
        <ToolSlot $active>
          <OrgChart />
          <Callout $left={28} $top={-1} $w={24} $h={22}>1</Callout>
        </ToolSlot>
        <ToolSlot><HiddenDoc /></ToolSlot>
        <ToolSlot><SearchGear /></ToolSlot>
        <ToolSlot><DocLetter letter="O" /></ToolSlot>
        <ToolSlot><DocLetter letter="R" /></ToolSlot>
        <ToolRight>
          <FilterArrow />
          <ToolDivider />
          <ToolSlot $w={30}><Bell /></ToolSlot>
          <ToolSlot $w={30}><Users /></ToolSlot>
          <ToolSlot $w={30}><Home /></ToolSlot>
        </ToolRight>
      </Toolbar>

      <WindowHeader>
        <Logo />
        <TitleText>Fluxo de Trabalho</TitleText>
        <WinButtons>
          <WinButton><Minimize /></WinButton>
          <WinButton><CloseX /></WinButton>
        </WinButtons>
      </WindowHeader>

      <Main>
        <LeftPane>
          <Tabs $left={9} $lift={2}>
            <Tab $active $w={101}>Fluxos de trabalho</Tab>
            <Tab $w={56}>Pesquisar</Tab>
          </Tabs>
          <Panel>
            <PanelSection $h={119}>
              <FieldLabel $top={10}>Fluxo de trabalho</FieldLabel>
              <SelectBox>
                <Selected>Fluxo Digital - Gabinete</Selected>
                <ChevronDown />
              </SelectBox>
              <FilterLine>
                <span>Filtro de conteúdo &gt;&gt;</span>
                <Broom />
              </FilterLine>
              <FieldLabel $top={5}>Filtrar filas de trabalho</FieldLabel>
              <TextInput>Digite o texto para filtrar…</TextInput>
            </PanelSection>
            <PanelSection $h={70}>
              <RadioSet>
                <RadioLegend>Visualizar processos com</RadioLegend>
                <RadioRow><RadioDot $on />Sigilo externo ou sem sigilo</RadioRow>
                <RadioRow><RadioDot />Sigilo absoluto</RadioRow>
              </RadioSet>
            </PanelSection>
            <PanelSection $h={21}>
              <IconStrip $pad={0}>
                <TreeTable />
                <Rows2 />
              </IconStrip>
            </PanelSection>
          </Panel>
          <Frame $left={10} $top={24} $w={348} $h={47} $b={3} />
          <Callout $left={358} $top={26} $w={23} $h={23}>2</Callout>

          <Tabs $left={13}>
            <Tab $active $w={75}>Todas as filas</Tab>
            <Tab $w={76}>Filas favoritas</Tab>
          </Tabs>
          <TreePanel>
            <TreeBody>
              <TreeList>
                <TreeListInner>
                  <RootLine />
                  <TreeRoot>
                    <Collapse />
                    <TreeDoc />
                    <RootLabel>Processo</RootLabel>
                  </TreeRoot>
                  {queues.map((q, i) => (
                    <TreeRow key={q.label} $muted={q.muted}>
                      <TreeDoc />
                      <TreeLabel $sel={i === 0}>{q.label}</TreeLabel>
                    </TreeRow>
                  ))}
                </TreeListInner>
              </TreeList>
              <VBar>
                <BarArrow><Up /></BarArrow>
                <VThumb $h={105} $mt="22px" />
                <BarArrow $end><Up flip /></BarArrow>
              </VBar>
            </TreeBody>
            <HBar>
              <ArrowCell $w={17}><Side /></ArrowCell>
              <HThumb />
              <ArrowCell $w={59}><Side flip /></ArrowCell>
            </HBar>
          </TreePanel>
          <Frame $left={48} $top={275} $w={290} $h={24} $b={2} />
          <Callout $left={336} $top={275} $w={26} $h={24}>3</Callout>

          <BottomBar>
            <span><u>A</u>tualizar</span>
            <span><u>F</u>echar</span>
          </BottomBar>
        </LeftPane>

        <RightPane>
          <ActionBar>
            <ActionSlot $w={16}><YellowDoc /></ActionSlot>
            <ActionSlot $w={30}><Refresh /></ActionSlot>
            <ActionSep />
            <ActionSlot $w={20}><CheckDoc /></ActionSlot>
            <ActionSlot $w={26}><Copy /></ActionSlot>
            <ActionSep />
            <ActionSlot $w={16}><DocFloppy /></ActionSlot>
            <ActionSlot $w={26}><FloppyDoc /></ActionSlot>
            <ActionSep />
            <ActionSlot $w={22}><DisabledDoc /></ActionSlot>
            <ActionSlot $w={23} $on><StationSearch /></ActionSlot>
            <ActionSlot $w={22}><Comment /></ActionSlot>
            <ActionSlot $w={20}><StarClock /></ActionSlot>
            <Legend>Legenda</Legend>
            <CaretBox><Caret /></CaretBox>
            <IconStrip $pad={7} $push>
              <TreeTable />
              <Rows2 />
            </IconStrip>
          </ActionBar>

          <ViewRow>
            <ViewLabel>Estilo da visualização</ViewLabel>
            <ViewSelect>
              <Selected>Padrão</Selected>
              <ChevronDown />
            </ViewSelect>
            <ViewIcons>
              <Floppy />
              <Trash />
              <Pencil />
              <Excel />
              <TextDoc />
              <WindowUp />
            </ViewIcons>
          </ViewRow>

          <ButtonRow>
            <ActionButton $w={117}><SplitLabel>Gerar Despacho</SplitLabel><SplitCaret /></ActionButton>
            <ActionButton $w={91}><SplitLabel>Gerar Voto</SplitLabel><SplitCaret /></ActionButton>
            <ActionButton $w={158}><SplitLabel>Gerar Relatório do Voto</SplitLabel><SplitCaret /></ActionButton>
            <ActionButton $w={173} $gap={-3}><SplitLabel>Gerar Decisão Monocrática</SplitLabel><SplitCaret /></ActionButton>
            <ActionButton $w={24} $gap={-3}>...</ActionButton>
            <ActionButton $w={24}><FilterArrow /></ActionButton>
          </ButtonRow>

          <Card>
            <CardMain>
              <CardContent>
                <GroupHint>Arraste um cabeçalho de coluna aqui para agrupar pela coluna</GroupHint>
                <HeaderRow>
                  <HeaderCell>S...</HeaderCell>
                  <HeaderCell>Seq.<Sort /></HeaderCell>
                  <HeaderCell $center><Bookmark /></HeaderCell>
                  <HeaderCell $center><HeadCheck /></HeaderCell>
                  <HeaderCell $center><HeadFlow /></HeaderCell>
                  <HeaderCell $center><LinkIcon /></HeaderCell>
                  <HeaderCell>Processo<Sort /></HeaderCell>
                  <HeaderCell>Entrada<Sort /></HeaderCell>
                  <HeaderCell>Classe<Sort color="#1a1ae0" /></HeaderCell>
                </HeaderRow>
                <Rows>
                  {procs.map((p, i) => (
                    <Row key={i} $stripe={i % 2 === 1} $sel={p.sel}>
                      <CheckCell $focus={p.sel}><CheckBox /></CheckCell>
                      <Center>{p.seq}</Center>
                      <span />
                      <Center>{p.ok && <GreenCheck />}</Center>
                      <Center>{p.num !== undefined && <LinkNumber>{p.num}</LinkNumber>}</Center>
                      <Center>{p.link && <LinkIcon />}</Center>
                      <SmearCell>
                        <SmearBack $sel={p.sel}>
                          {p.smear.map((w, j) => (
                            <Smear key={j} $w={w} $sel={p.sel} $dark={i % 2 === 1} />
                          ))}
                        </SmearBack>
                      </SmearCell>
                      <TextCell>{p.date} ...</TextCell>
                      <TextCell>Agravo de Instrumento</TextCell>
                    </Row>
                  ))}
                </Rows>
              </CardContent>
              <VBar>
                <BarArrow><Up /></BarArrow>
                <VThumb $h={95} $mt="auto" />
                <BarArrow $h={3} />
              </VBar>
            </CardMain>
            <FilterBar>
              <ClearFilter><SmallX /></ClearFilter>
              ((Classe = aditamento) OR (Classe = agravo de instrumento))
              <FilterChevron><Up flip /></FilterChevron>
            </FilterBar>
          </Card>

          <StatusLine>Existem 98 processos nesta fila</StatusLine>
          <PartsLine>
            Partes:
            <PartsSmear />
          </PartsLine>

          <Tooltip>Configuração da estação</Tooltip>
        </RightPane>
      </Main>
    </Page>
  );
};

export default App;
